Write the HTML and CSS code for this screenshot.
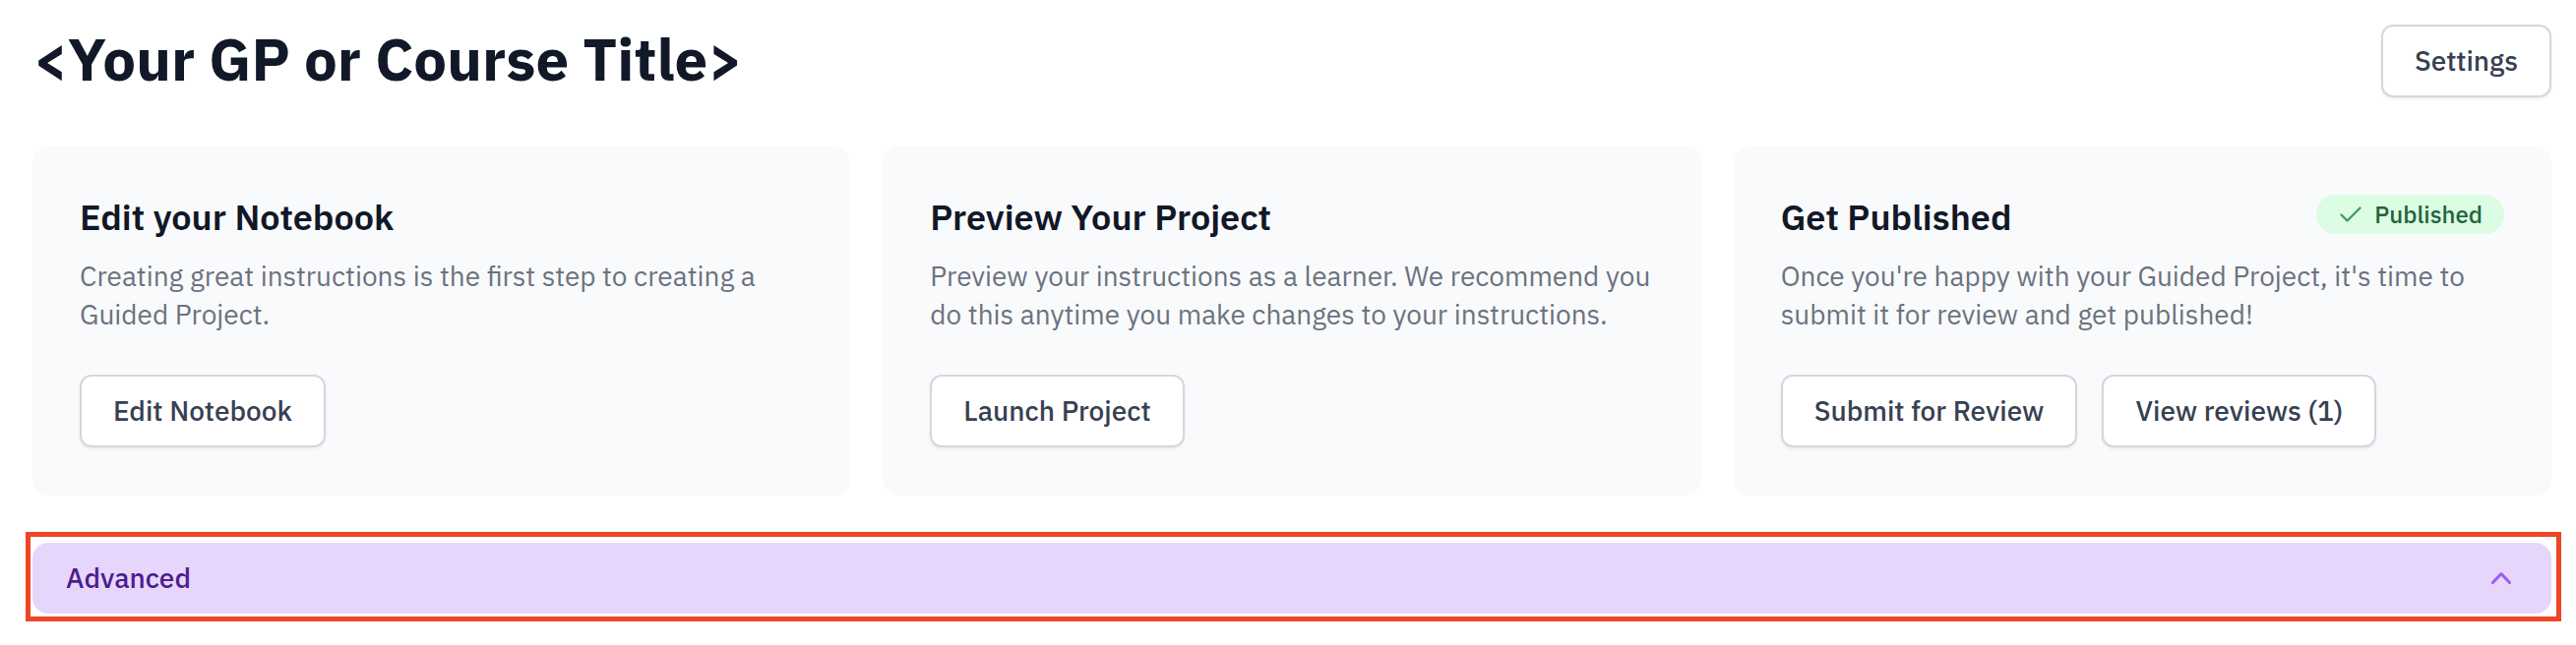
FILE: index.html
```html
<!DOCTYPE html>
<html lang="en">
<head>
<meta charset="utf-8">
<title>Your GP or Course Title</title>
<link rel="stylesheet" href="styles.css">
</head>
<body>
<main class="page">
  <header class="page-header">
    <h1 class="page-title">&lt;Your GP or Course Title&gt;</h1>
    <button class="btn" type="button">Settings</button>
  </header>

  <section class="cards">
    <article class="card">
      <div class="card-head">
        <h2 class="card-title">Edit your Notebook</h2>
      </div>
      <p class="card-text">Creating great instructions is the first step to creating a Guided Project.</p>
      <div class="card-actions">
        <button class="btn" type="button">Edit Notebook</button>
      </div>
    </article>

    <article class="card">
      <div class="card-head">
        <h2 class="card-title">Preview Your Project</h2>
      </div>
      <p class="card-text">Preview your instructions as a learner. We recommend you do this anytime you make changes to your instructions.</p>
      <div class="card-actions">
        <button class="btn" type="button">Launch Project</button>
      </div>
    </article>

    <article class="card">
      <div class="card-head">
        <h2 class="card-title">Get Published</h2>
        <span class="badge">
          <svg class="badge-icon" viewBox="0 0 22 16" width="22" height="16" aria-hidden="true"><path d="M1.5 8.5l6 6L20.5 1.5" fill="none" stroke="currentColor" stroke-width="2.4" stroke-linecap="round" stroke-linejoin="round"/></svg>
          Published
        </span>
      </div>
      <p class="card-text">Once you're happy with your Guided Project, it's time to submit it for review and get published!</p>
      <div class="card-actions">
        <button class="btn" type="button">Submit for Review</button>
        <button class="btn" type="button">View reviews (1)</button>
      </div>
    </article>
  </section>

  <div class="advanced-wrap">
    <button class="advanced" type="button">
      <span class="advanced-label">Advanced</span>
      <svg class="advanced-icon" viewBox="0 0 20 20" width="40" height="40" aria-hidden="true"><path fill="currentColor" fill-rule="evenodd" d="M14.77 12.79a.75.75 0 01-1.06-.02L10 8.832 6.29 12.77a.75.75 0 11-1.08-1.04l4.25-4.5a.75.75 0 011.08 0l4.25 4.5a.75.75 0 01-.02 1.06z" clip-rule="evenodd"/></svg>
    </button>
  </div>
</main>
</body>
</html>
```
FILE: styles.css
```css
* { box-sizing: border-box; }

html, body {
  margin: 0;
  background: #ffffff;
}

body {
  font-family: "IBM Plex Sans", Roboto, "Liberation Sans", sans-serif;
  color: #111827;
}

.page {
  padding: 24px 25px 32px 33px;
}

.page-header {
  display: flex;
  align-items: center;
  justify-content: space-between;
}

.page-title {
  margin: 0 0 4px;
  font-size: 60px;
  line-height: 72px;
  font-weight: 700;
  color: #111827;
}

.btn {
  font-family: inherit;
  font-size: 28px;
  font-weight: 500;
  line-height: 40px;
  color: #374151;
  background: #ffffff;
  border: 2px solid #d4d7dd;
  border-radius: 12px;
  padding: 15px 32px;
  box-shadow: 0 2px 3px rgba(17, 24, 39, 0.06);
  cursor: pointer;
}

.cards {
  display: grid;
  grid-template-columns: repeat(3, 1fr);
  gap: 33px;
  margin-top: 49px;
}

.card {
  background: #f9fafb;
  border-radius: 16px;
  padding: 48px 48px 49px;
}

.card-head {
  display: flex;
  align-items: flex-start;
  justify-content: space-between;
}

.card-title {
  margin: 0;
  font-size: 36px;
  line-height: 48px;
  font-weight: 600;
  color: #111827;
}

.badge {
  display: inline-flex;
  align-items: center;
  gap: 13px;
  margin-top: 1px;
  height: 40px;
  padding: 0 22px 0 24px;
  border-radius: 20px;
  background: #dcfce4;
  color: #22653a;
  font-size: 24px;
  font-weight: 500;
  line-height: 40px;
}

.badge-icon {
  color: #3f9f58;
  flex: none;
}

.card-text {
  margin: 16px 0 0;
  font-size: 28px;
  line-height: 1.4;
  color: #6b7280;
}

.card-actions {
  display: flex;
  gap: 25px;
  margin-top: 42px;
}

.advanced-wrap {
  position: relative;
  margin-top: 48px;
}

.advanced-wrap::after {
  content: "";
  position: absolute;
  top: -11px;
  left: -7px;
  right: -10px;
  bottom: -8px;
  border: 5px solid #ef4426;
  pointer-events: none;
}

.advanced {
  display: flex;
  align-items: center;
  justify-content: space-between;
  width: 100%;
  height: 72px;
  padding: 0 31px 0 34px;
  border: 0;
  border-radius: 16px;
  background: #e7d6fb;
  font-family: inherit;
  font-size: 28px;
  font-weight: 500;
  line-height: 40px;
  color: #4c1d8f;
  cursor: pointer;
  text-align: left;
}

.advanced-icon {
  color: #9d5cf0;
  flex: none;
}
```
